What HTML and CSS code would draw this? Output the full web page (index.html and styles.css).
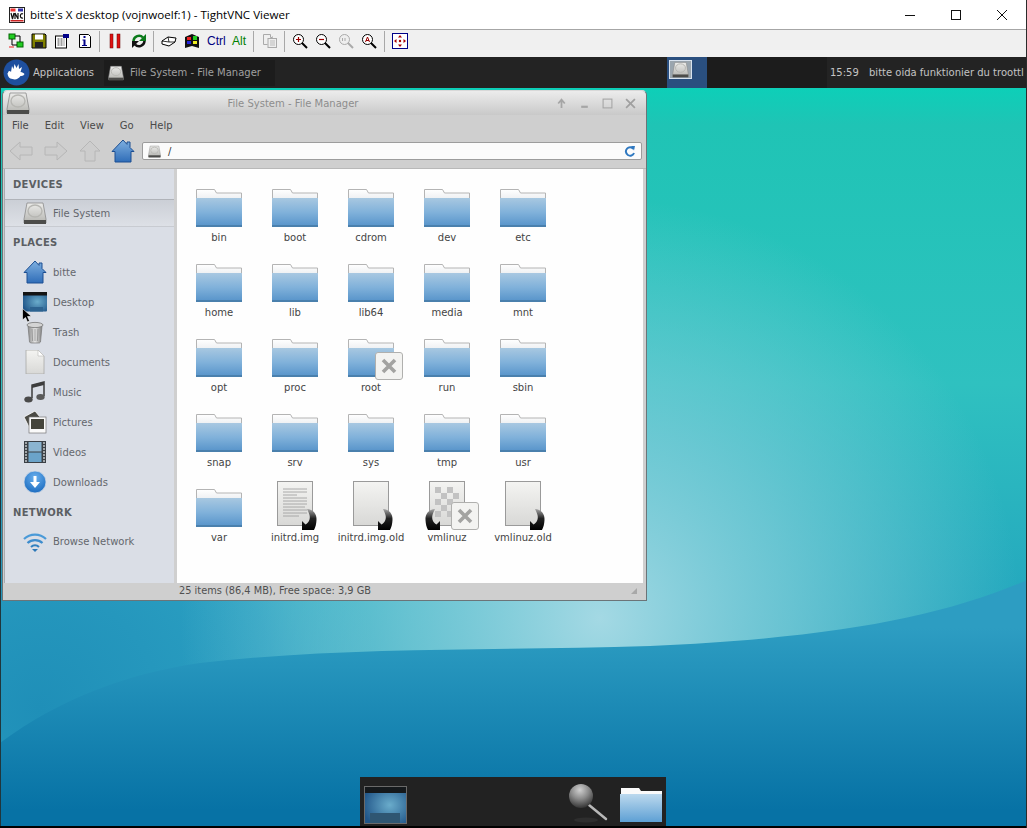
FILE: index.html
```html
<!DOCTYPE html>
<html lang="en">
<head>
<meta charset="utf-8">
<title>bitte's X desktop (vojnwoelf:1) - TightVNC Viewer</title>
<link rel="stylesheet" href="styles.css">
</head>
<body>
<svg class="defs" width="0" height="0" aria-hidden="true">
  <defs>
    <linearGradient id="gFolder" x1="0" y1="0" x2="0" y2="1"><stop offset="0" stop-color="#a8c8e1"/><stop offset=".5" stop-color="#80b1da"/><stop offset="1" stop-color="#5592c9"/></linearGradient>
    <linearGradient id="gDockFolder" x1="0" y1="0" x2="0" y2="1"><stop offset="0" stop-color="#bcd9ee"/><stop offset="1" stop-color="#5ea0d4"/></linearGradient>
    <linearGradient id="gTab" x1="0" y1="0" x2="0" y2="1"><stop offset="0" stop-color="#ffffff"/><stop offset="1" stop-color="#e6e9ec"/></linearGradient>
    <linearGradient id="gHome" x1="0" y1="0" x2="0" y2="1"><stop offset="0" stop-color="#7fb0e0"/><stop offset="1" stop-color="#2f6db8"/></linearGradient>
    <linearGradient id="gDisk" x1="0" y1="0" x2="0" y2="1"><stop offset="0" stop-color="#ececea"/><stop offset="1" stop-color="#b4b4b0"/></linearGradient>
    <linearGradient id="gPage" x1="0" y1="0" x2="0" y2="1"><stop offset="0" stop-color="#f4f4f2"/><stop offset="1" stop-color="#d8d8d6"/></linearGradient>
    <linearGradient id="gBin" x1="0" y1="0" x2="1" y2="0"><stop offset="0" stop-color="#8a8a8a"/><stop offset=".5" stop-color="#e6e6e6"/><stop offset="1" stop-color="#808080"/></linearGradient>
    <linearGradient id="gLink" x1="0" y1="0" x2="0" y2="1"><stop offset="0" stop-color="#a8a8a8"/><stop offset=".45" stop-color="#222"/><stop offset="1" stop-color="#000"/></linearGradient>
    <radialGradient id="gDesk" cx=".6" cy=".5" r=".65"><stop offset="0" stop-color="#6aaccb"/><stop offset="1" stop-color="#215689"/></radialGradient>
    <radialGradient id="gBall" cx=".45" cy=".25" r=".75"><stop offset="0" stop-color="#d0d0d0"/><stop offset=".5" stop-color="#8a8a8a"/><stop offset="1" stop-color="#353535"/></radialGradient>
    <radialGradient id="gDl" cx=".5" cy=".3" r=".7"><stop offset="0" stop-color="#6ab0ee"/><stop offset="1" stop-color="#1c6cc0"/></radialGradient>

    <symbol id="folder" viewBox="0 0 46 38">
      <path d="M.5.5h18l2 3.500h25v10H.5z" fill="url(#gTab)" stroke="#b4b4b4"/>
      <rect x="0" y="9" width="46" height="29" fill="url(#gFolder)"/>
      <rect x="0" y="36" width="46" height="2" fill="#4a80ad"/>
    </symbol>
    <symbol id="disk" viewBox="0 0 24 24">
      <path d="M4 2h16l3 16v4H1v-4z" fill="url(#gDisk)" stroke="#8a8a8a" stroke-width=".8"/>
      <ellipse cx="12" cy="10" rx="7" ry="6" fill="none" stroke="#b6b6b2" stroke-width="1.400"/>
      <rect x="1" y="19" width="22" height="4" fill="#4c4c4a"/>
    </symbol>
    <symbol id="home" viewBox="0 0 24 24">
      <path d="M12 1 1 12.500h3V23h16V12.500h3L19 8.500V3h-3v2.400z" fill="url(#gHome)" stroke="#1d4f92"/>
    </symbol>
    <symbol id="arrL" viewBox="0 0 26 24"><path d="M12 3 2 12l10 9v-5h12V8H12z" fill="#cdcdcd" stroke="#b6b6b6"/></symbol>
    <symbol id="arrR" viewBox="0 0 26 24"><path d="M14 3l10 9-10 9v-5H2V8h12z" fill="#cdcdcd" stroke="#b6b6b6"/></symbol>
    <symbol id="arrU" viewBox="0 0 24 24"><path d="M12 2 2 12h5v10h10V12h5z" fill="#cdcdcd" stroke="#b6b6b6"/></symbol>
    <symbol id="desk" viewBox="0 0 24 20">
      <rect x="0" y="0" width="24" height="19.500" rx="1" fill="url(#gDesk)"/>
      <rect x="0" y="0" width="24" height="3.500" fill="#141414"/>
      <rect x="7" y="15" width="13" height="4.500" fill="#2d6390"/>
    </symbol>
    <symbol id="trash" viewBox="0 0 24 24">
      <path d="M5 6h14l-1.500 16a2 2 0 0 1-2 1h-7a2 2 0 0 1-2-1z" fill="url(#gBin)" stroke="#777" stroke-width=".7"/>
      <ellipse cx="12" cy="5" rx="8" ry="2.600" fill="#d4d4d4" stroke="#777" stroke-width=".8"/>
      <path d="M9 9l.6 12M12 9v12M15 9l-.6 12" stroke="#8f8f8f" stroke-width=".8"/>
    </symbol>
    <symbol id="doc" viewBox="0 0 24 24">
      <path d="M3 0h12l6 6v18H3z" fill="url(#gPage)" stroke="#a8a8a6" stroke-width=".8"/>
      <path d="M15 0v6h6z" fill="#ffffff" stroke="#b8b8b6" stroke-width=".6"/>
    </symbol>
    <symbol id="music" viewBox="0 0 24 24">
      <path d="M9 18V5l12-3v14" fill="none" stroke="#3d3d3d" stroke-width="1.500"/>
      <path d="M9 5l12-3v3L9 8z" fill="#3d3d3d"/>
      <ellipse cx="5.500" cy="19.500" rx="4.200" ry="3" fill="#4a4a4a"/>
      <ellipse cx="17.500" cy="17" rx="4.200" ry="3" fill="#5a5a5a"/>
    </symbol>
    <symbol id="pics" viewBox="0 0 24 24">
      <path d="M1 7 12 1l5 6-9 14z" fill="#4b4b45" stroke="#fff" stroke-width=".8"/>
      <rect x="6" y="7" width="17" height="16" fill="#fafafa" stroke="#777" stroke-width=".7"/>
      <rect x="8" y="9" width="13" height="10" fill="#45453c"/>
    </symbol>
    <symbol id="film" viewBox="0 0 24 24">
      <rect x="1" y="1" width="22" height="22" fill="#3b4046"/>
      <rect x="5.500" y="2" width="13" height="9.500" fill="#8bb4d0"/>
      <rect x="5.500" y="12.500" width="13" height="9.500" fill="#6ba3c9"/>
      <path d="M2 3h2M2 6h2M2 9h2M2 12h2M2 15h2M2 18h2M2 21h2M20 3h2M20 6h2M20 9h2M20 12h2M20 15h2M20 18h2M20 21h2" stroke="#c4c7ca" stroke-width="1.400"/>
    </symbol>
    <symbol id="dl" viewBox="0 0 24 24">
      <circle cx="12" cy="12" r="11" fill="url(#gDl)" stroke="#cfd8e4" stroke-width=".8"/>
      <path d="M10.500 6h3v6H17l-5 6-5-6h3.500z" fill="#fff"/>
    </symbol>
    <symbol id="wifi" viewBox="0 0 24 24">
      <path d="M1 9a16 16 0 0 1 22 0" fill="none" stroke="#4a9ad8" stroke-width="2.200"/>
      <path d="M4.500 13a11 11 0 0 1 15 0" fill="none" stroke="#3d8ccd" stroke-width="2.200"/>
      <path d="M8 17a6 6 0 0 1 8 0" fill="none" stroke="#3180c0" stroke-width="2.200"/>
      <path d="M12 22l-3-3h6z" fill="#2c78b8"/>
    </symbol>
    <symbol id="file" viewBox="0 0 36 46">
      <rect x=".5" y=".5" width="35" height="44" fill="url(#gPage)" stroke="#9a9a9a"/>
    </symbol>
    <symbol id="link" viewBox="0 0 16 22">
      <path d="M6 1c6 0 10 5 9.500 11-.2 4-1 7-2.500 10H1v-9l3.500 3.500C8 14.500 9.500 11 8.500 7 8 5 7 3 6 1z" fill="url(#gLink)"/>
    </symbol>
    <symbol id="bad" viewBox="0 0 28 28">
      <rect x=".5" y=".5" width="27" height="27" rx="2.500" fill="#f3f3f1" stroke="#b0b0ae"/>
      <path d="M8 8l12 12M20 8 8 20" stroke="#a3a3a1" stroke-width="3.600"/>
    </symbol>
  </defs>
</svg>

<header class="vnc-title">
  <svg class="vnc-logo" viewBox="0 0 16 16"><rect x=".5" y=".5" width="15" height="15" fill="#fff" stroke="#222"/><rect x="1.500" y="1.500" width="5" height="3" fill="#e33"/><rect x="9" y="1.500" width="5" height="3" fill="#33a"/><path d="M2 6l1.500 6L5 6M6 12V6l3 6V6M14 7c-3-2-4 5 0 4" fill="none" stroke="#111" stroke-width="1.200"/><rect x="1.500" y="13" width="13" height="1.500" fill="#c22"/></svg>
  <span class="vnc-name">bitte's X desktop (vojnwoelf:1) - TightVNC Viewer</span>
  <div class="vnc-controls">
    <svg class="ctl" viewBox="0 0 10 10"><path d="M0 5.500h10" stroke="#111"/></svg>
    <svg class="ctl" viewBox="0 0 10 10"><rect x=".5" y=".5" width="9" height="9" fill="none" stroke="#111"/></svg>
    <svg class="ctl" viewBox="0 0 10 10"><path d="M0 0l10 10M10 0 0 10" stroke="#111"/></svg>
  </div>
</header>

<nav class="vnc-toolbar">
  <svg class="tb" viewBox="0 0 16 16"><rect x="1" y="1" width="6" height="5" fill="#2c2" stroke="#060"/><rect x="9" y="9" width="6" height="5" fill="#2c2" stroke="#060"/><path d="M4 6v6h5M7 3h5v6" fill="none" stroke="#000"/><path d="M1 14h5" stroke="#e22"/></svg>
  <svg class="tb" viewBox="0 0 16 16"><path d="M1 1h13l1 1v13H1z" fill="#808000" stroke="#000"/><rect x="4" y="1.500" width="8" height="5" fill="#fff"/><rect x="4" y="9" width="8" height="6" fill="#222"/></svg>
  <svg class="tb" viewBox="0 0 16 16"><rect x="1.500" y="3" width="11" height="12" fill="#fff" stroke="#000"/><path d="M3.500 6h7M3.500 8h7M3.500 10h7M3.500 12h7" stroke="#444" stroke-dasharray="2 1"/><rect x="9" y="1" width="6" height="4" fill="#008"/></svg>
  <svg class="tb" viewBox="0 0 16 16"><path d="M2.500 1.500h9l2 2v11h-11z" fill="#fff" stroke="#000"/><rect x="6.500" y="3" width="2" height="2" fill="#008"/><path d="M5.500 6.500h3v5.500h1.500v1H5v-1h1.500V7.500h-1z" fill="#008"/></svg>
  <i class="tsep"></i>
  <svg class="tb" viewBox="0 0 16 16"><rect x="3" y="1" width="3" height="14" fill="#e01010" stroke="#600" stroke-width=".5"/><rect x="10" y="1" width="3" height="14" fill="#e01010" stroke="#600" stroke-width=".5"/></svg>
  <svg class="tb tb-nudge" viewBox="0 0 16 16"><path d="M2.500 8A5.500 5.500 0 0 1 12 4.500" fill="none" stroke="#0a7a1a" stroke-width="2.500"/><path d="M15 1v7H8z" fill="#0a7a1a"/><path d="M13.500 8A5.500 5.500 0 0 1 4 11.500" fill="none" stroke="#111" stroke-width="2.500"/><path d="M1 15V8h7z" fill="#111"/></svg>
  <i class="tsep"></i>
  <svg class="tb" viewBox="0 0 16 16"><path d="M1 8l6-4 8 1-1 4-6 4-7-2z" fill="#fff" stroke="#000"/><path d="M7 4l1 5 6 0M1 8l7 1" fill="none" stroke="#000" stroke-width=".8"/></svg>
  <svg class="tb" viewBox="0 0 16 16"><path d="M1 4l7-3 7 3v11l-7-2-7 2z" fill="#111"/><rect x="3" y="4" width="4" height="3" fill="#e22"/><rect x="9" y="3" width="4" height="4" fill="#2c2"/><rect x="3" y="8" width="4" height="3" fill="#22d"/><rect x="9" y="8" width="4" height="3" fill="#ee2"/></svg>
  <span class="tb-text tb-ctrl">Ctrl</span>
  <span class="tb-text tb-alt">Alt</span>
  <i class="tsep"></i>
  <svg class="tb tb-nudge" viewBox="0 0 16 16"><path d="M1.500 1.500h7v3h2v-1M1.500 1.500v10h4" fill="#eee" stroke="#aaa"/><rect x="6" y="5.500" width="8.500" height="9" fill="#eee" stroke="#aaa"/><path d="M8 8h5M8 10h5M8 12h5" stroke="#bbb"/></svg>
  <i class="tsep"></i>
  <svg class="tb" viewBox="0 0 16 16"><circle cx="6.500" cy="6.500" r="5" fill="#fff" stroke="#000"/><path d="M10 10l5 5" stroke="#000" stroke-width="2"/><path d="M4 6.500h5M6.500 4v5" stroke="#900" stroke-width="1.200"/></svg>
  <svg class="tb" viewBox="0 0 16 16"><circle cx="6.500" cy="6.500" r="5" fill="#fff" stroke="#000"/><path d="M10 10l5 5" stroke="#000" stroke-width="2"/><path d="M4 6.500h5" stroke="#900" stroke-width="1.200"/></svg>
  <svg class="tb" viewBox="0 0 16 16"><circle cx="6.500" cy="6.500" r="5" fill="#eee" stroke="#aaa"/><path d="M10 10l5 5" stroke="#aaa" stroke-width="2"/><path d="M4.500 5v3M7 5v3" stroke="#aaa"/></svg>
  <svg class="tb" viewBox="0 0 16 16"><circle cx="6.500" cy="6.500" r="5" fill="#fff" stroke="#000"/><path d="M10 10l5 5" stroke="#000" stroke-width="2"/><path d="M4.500 9l2-5 2 5M5 7.500h3" fill="none" stroke="#900"/></svg>
  <i class="tsep tsep-last"></i>
  <svg class="tb" viewBox="0 0 16 16"><rect x=".5" y=".5" width="15" height="15" fill="#fff" stroke="#008"/><path d="M8 2l2 2.500H6zM8 14l2-2.500H6zM2 8l2.500-2v4zM14 8l-2.500-2v4z" fill="#a00"/><circle cx="8" cy="8" r="1.200" fill="#a00"/></svg>
</nav>

<section class="xfce-panel">
  <svg class="xfce-logo" viewBox="0 0 27 27"><circle cx="13.500" cy="13.500" r="13" fill="#1e4f9e"/><path d="M5 14c0-2 2-3 3-1l1-6 1.500 3 1-5 2 4 2-4 .5 5 3-2-1.500 5c2 0 3 1 4 2-1 2-3 2-4 2-2 3-5 4-8 3-3 0-5-3-5-6z" fill="#fff"/></svg>
  <span class="panel-apps">Applications</span>
  <div class="panel-task">
    <svg class="task-icon"><use href="#disk"/></svg>
    <span>File System - File Manager</span>
  </div>
  <div class="panel-pager">
    <div class="pager-cell pager-on"><svg class="pager-win"><use href="#disk"/></svg></div>
    <div class="pager-cell"></div>
    <div class="pager-cell"></div>
    <div class="pager-cell"></div>
  </div>
  <span class="panel-clock">15:59</span>
  <span class="panel-user">bitte oida funktionier du troottl</span>
</section>

<main class="desktop">
  <svg class="wallpaper" viewBox="0 0 1027 738" preserveAspectRatio="none">
    <defs>
      <linearGradient id="wBase" x1="0" y1="0" x2="0" y2="1"><stop offset="0" stop-color="#0dcfb8"/><stop offset=".05" stop-color="#1fc4b5"/><stop offset=".4" stop-color="#2fc1c0"/><stop offset=".7" stop-color="#24a7be"/><stop offset="1" stop-color="#1a90b5"/></linearGradient>
      <radialGradient id="wGlow" gradientUnits="userSpaceOnUse" cx="600" cy="530" r="420"><stop offset="0" stop-color="#a4d9e4"/><stop offset=".45" stop-color="#7fcdd9" stop-opacity=".75"/><stop offset="1" stop-color="#7fcdd9" stop-opacity="0"/></radialGradient>
      <radialGradient id="wLeft" gradientUnits="userSpaceOnUse" cx="40" cy="620" r="340"><stop offset="0" stop-color="#1f8fb8"/><stop offset=".35" stop-color="#2597bd"/><stop offset=".7" stop-color="#2c9fc2" stop-opacity=".85"/><stop offset="1" stop-color="#46aecb" stop-opacity="0"/></radialGradient>
      <linearGradient id="wLow" gradientUnits="userSpaceOnUse" x1="0" y1="540" x2="0" y2="722"><stop offset="0" stop-color="#2d9dc2"/><stop offset="1" stop-color="#0772a5"/></linearGradient>
    </defs>
    <rect width="1027" height="738" fill="url(#wBase)"/>
    <rect width="1027" height="738" fill="url(#wLeft)"/>
    <rect width="1027" height="738" fill="url(#wGlow)"/>
    <path d="M1027 492C940 530 830 550 650 558 500 563 350 558 200 575 130 585 60 610 0 655V738H1027Z" fill="url(#wLow)"/>
  </svg>

  <article class="fm">
    <div class="fm-title">
      <svg class="fm-wicon"><use href="#disk"/></svg>
      <span class="fm-name">File System - File Manager</span>
      <div class="fm-btns">
        <svg class="fm-btn" viewBox="0 0 10 10"><path d="M5 9V2M2 5l3-3.500L8 5" fill="none" stroke="#a6a6a6" stroke-width="1.600"/></svg>
        <svg class="fm-btn" viewBox="0 0 10 10"><path d="M2 8h6" stroke="#a6a6a6" stroke-width="2"/></svg>
        <svg class="fm-btn" viewBox="0 0 10 10"><rect x="1" y="1" width="8" height="8" fill="none" stroke="#a6a6a6"/></svg>
        <svg class="fm-btn" viewBox="0 0 10 10"><path d="M1 1l8 8M9 1 1 9" stroke="#a0a0a0" stroke-width="1.600"/></svg>
      </div>
    </div>
    <div class="fm-menu"><span>File</span><span>Edit</span><span>View</span><span>Go</span><span>Help</span></div>
    <div class="fm-tools">
      <svg class="tool-nav"><use href="#arrL"/></svg>
      <svg class="tool-nav"><use href="#arrR"/></svg>
      <svg class="tool-nav tool-up"><use href="#arrU"/></svg>
      <svg class="tool-nav tool-home"><use href="#home"/></svg>
      <div class="fm-path">
        <svg class="path-disk"><use href="#disk"/></svg>
        <span class="path-text">/</span>
        <svg class="path-reload" viewBox="0 0 12 12"><path d="M9.500 4A4.200 4.200 0 1 0 10 8" fill="none" stroke="#2f78c0" stroke-width="2"/><path d="M7 1l4 0-1 4.500z" fill="#2f78c0"/></svg>
      </div>
    </div>
    <div class="fm-body">
      <aside class="side">
        <div class="side-head">DEVICES</div>
        <div class="side-row side-sel"><svg class="side-icon"><use href="#disk"/></svg><span>File System</span></div>
        <div class="side-head">PLACES</div>
        <div class="side-row"><svg class="side-icon"><use href="#home"/></svg><span>bitte</span></div>
        <div class="side-row"><svg class="side-icon"><use href="#desk"/></svg><span>Desktop</span></div>
        <div class="side-row"><svg class="side-icon"><use href="#trash"/></svg><span>Trash</span></div>
        <div class="side-row"><svg class="side-icon"><use href="#doc"/></svg><span>Documents</span></div>
        <div class="side-row"><svg class="side-icon"><use href="#music"/></svg><span>Music</span></div>
        <div class="side-row"><svg class="side-icon"><use href="#pics"/></svg><span>Pictures</span></div>
        <div class="side-row"><svg class="side-icon"><use href="#film"/></svg><span>Videos</span></div>
        <div class="side-row"><svg class="side-icon"><use href="#dl"/></svg><span>Downloads</span></div>
        <div class="side-head">NETWORK</div>
        <div class="side-row side-net"><svg class="side-icon"><use href="#wifi"/></svg><span>Browse Network</span></div>
      </aside>
      <div class="split"></div>
      <div class="files">
        <div class="grid">
          <div class="item"><div class="ic"><svg class="ic-folder"><use href="#folder"/></svg></div><span>bin</span></div>
          <div class="item"><div class="ic"><svg class="ic-folder"><use href="#folder"/></svg></div><span>boot</span></div>
          <div class="item"><div class="ic"><svg class="ic-folder"><use href="#folder"/></svg></div><span>cdrom</span></div>
          <div class="item"><div class="ic"><svg class="ic-folder"><use href="#folder"/></svg></div><span>dev</span></div>
          <div class="item"><div class="ic"><svg class="ic-folder"><use href="#folder"/></svg></div><span>etc</span></div>
          <div class="item"><div class="ic"><svg class="ic-folder"><use href="#folder"/></svg></div><span>home</span></div>
          <div class="item"><div class="ic"><svg class="ic-folder"><use href="#folder"/></svg></div><span>lib</span></div>
          <div class="item"><div class="ic"><svg class="ic-folder"><use href="#folder"/></svg></div><span>lib64</span></div>
          <div class="item"><div class="ic"><svg class="ic-folder"><use href="#folder"/></svg></div><span>media</span></div>
          <div class="item"><div class="ic"><svg class="ic-folder"><use href="#folder"/></svg></div><span>mnt</span></div>
          <div class="item"><div class="ic"><svg class="ic-folder"><use href="#folder"/></svg></div><span>opt</span></div>
          <div class="item"><div class="ic"><svg class="ic-folder"><use href="#folder"/></svg></div><span>proc</span></div>
          <div class="item"><div class="ic"><svg class="ic-folder"><use href="#folder"/></svg><svg class="badge"><use href="#bad"/></svg></div><span>root</span></div>
          <div class="item"><div class="ic"><svg class="ic-folder"><use href="#folder"/></svg></div><span>run</span></div>
          <div class="item"><div class="ic"><svg class="ic-folder"><use href="#folder"/></svg></div><span>sbin</span></div>
          <div class="item"><div class="ic"><svg class="ic-folder"><use href="#folder"/></svg></div><span>snap</span></div>
          <div class="item"><div class="ic"><svg class="ic-folder"><use href="#folder"/></svg></div><span>srv</span></div>
          <div class="item"><div class="ic"><svg class="ic-folder"><use href="#folder"/></svg></div><span>sys</span></div>
          <div class="item"><div class="ic"><svg class="ic-folder"><use href="#folder"/></svg></div><span>tmp</span></div>
          <div class="item"><div class="ic"><svg class="ic-folder"><use href="#folder"/></svg></div><span>usr</span></div>
          <div class="item"><div class="ic"><svg class="ic-folder"><use href="#folder"/></svg></div><span>var</span></div>
          <div class="item"><div class="ic">
            <svg class="ic-file" viewBox="0 0 36 46"><use href="#file" width="36" height="46"/><path d="M6 8h24M6 11h24M6 14h14M6 17h24M6 20h24M6 23h24M6 26h22M6 29h24M6 32h24M6 35h16" stroke="#9a9a9a" stroke-width=".8"/></svg>
            <svg class="link link-r"><use href="#link"/></svg></div><span>initrd.img</span></div>
          <div class="item"><div class="ic"><svg class="ic-file"><use href="#file"/></svg><svg class="link link-r"><use href="#link"/></svg></div><span>initrd.img.old</span></div>
          <div class="item"><div class="ic">
            <svg class="ic-file" viewBox="0 0 36 46"><use href="#file" width="36" height="46"/><path d="M6 6h6v6H6zM18 6h6v6h-6zM12 12h6v6h-6zM24 12h6v6h-6zM6 18h6v6H6zM18 18h6v6h-6zM12 24h6v6h-6zM6 30h6v6H6zM18 30h6v6h-6z" fill="#c2c2c2"/></svg>
            <svg class="link link-l"><use href="#link"/></svg><svg class="badge"><use href="#bad"/></svg></div><span>vmlinuz</span></div>
          <div class="item"><div class="ic"><svg class="ic-file"><use href="#file"/></svg><svg class="link link-r"><use href="#link"/></svg></div><span>vmlinuz.old</span></div>
        </div>
      </div>
    </div>
    <footer class="fm-status">
      <span>25 items (86,4 MB), Free space: 3,9 GB</span>
      <svg class="grip" viewBox="0 0 8 8"><path d="M7 1v6H1z" fill="#a8a8a8"/></svg>
    </footer>
  </article>

  <svg class="cursor" viewBox="0 0 10 15"><path d="M.5.5v11.500l3-2.500 2 4.500 2-1-2-4.500h4z" fill="#000" stroke="#fff" stroke-width=".6"/></svg>

  <div class="dock">
    <svg class="dock-desk" viewBox="0 0 43 38"><rect x=".5" y=".5" width="42" height="37" fill="url(#gDesk)" stroke="#6a6a6a"/><rect x="1" y="1" width="41" height="6" fill="#15191c"/><rect x="6" y="27" width="30" height="10" fill="#2f5672"/></svg>
    <svg class="dock-search" viewBox="0 0 40 40"><path d="M21 21l17 14" stroke="#b8b8b8" stroke-width="2.500" stroke-linecap="round"/><circle cx="13" cy="12" r="12" fill="url(#gBall)"/><ellipse cx="18" cy="36" rx="12" ry="2.500" fill="#2e2e2e"/></svg>
    <svg class="dock-folder" viewBox="0 0 42 34"><path d="M1 0h18l2 3h21v9H1z" fill="#fafafa"/><path d="M0 6h42v28H0z" fill="url(#gDockFolder)"/></svg>
  </div>
</main>
</body>
</html>
```

FILE: styles.css
```css
* { box-sizing: border-box; }
html, body { margin: 0; padding: 0; }
body {
  width: 1027px;
  height: 828px;
  overflow: hidden;
  display: flex;
  flex-direction: column;
  background: #000;
  font-family: "DejaVu Sans", sans-serif;
  border-right: 1px solid #2b2b2b;
}
.defs { position: absolute; }

/* TightVNC frame */
.vnc-title {
  flex: 0 0 29px;
  display: flex;
  align-items: center;
  background: #fff;
  padding-left: 9px;
  font-family: "Open Sans", sans-serif;
  font-size: 11.600px;
  color: #000;
}
.vnc-logo { width: 16px; height: 16px; margin-right: 5px; }
.vnc-name { flex: 1; }
.vnc-controls { display: flex; align-items: center; gap: 36px; padding-right: 19px; }
.ctl { width: 10px; height: 10px; }

.vnc-toolbar {
  flex: 0 0 28px;
  display: flex;
  align-items: center;
  gap: 7px;
  background: #f0f0f0;
  border-top: 1px solid #a6a6a6;
  padding: 0 0 5px 8px;
}
.tb { width: 16px; height: 16px; flex: none; }
.tb-nudge { margin-left: 1px; }
.tsep { width: 1px; height: 21px; background: #a8a8a8; flex: none; margin-left: -1px; }
.tsep-last { margin-left: 0; }
.tb-text { font-family: "Liberation Sans", sans-serif; font-size: 12px; width: 16px; text-align: center; flex: none; }
.tb-ctrl { color: #000080; }
.tb-alt { color: #008000; margin-left: 1px; }

/* Xfce panel */
.xfce-panel {
  flex: 0 0 31px;
  display: flex;
  align-items: center;
  background: #232323;
  color: #c4c4c4;
  font-size: 10px;
  padding-left: 3px;
}
.xfce-logo { width: 27px; height: 27px; flex: none; margin-right: 3px; }
.panel-apps { width: 71px; flex: none; }
.panel-task {
  width: 171px;
  height: 26px;
  display: flex;
  align-items: center;
  gap: 6px;
  padding-left: 4px;
  background: #1c1c1c;
  color: #a0a0a0;
  flex: none;
}
.task-icon { width: 16px; height: 16px; }
.panel-pager { display: flex; margin-left: auto; height: 31px; }
.pager-cell { width: 40px; background: #1c1c1c; display: flex; align-items: center; padding-left: 2px; padding-bottom: 7px; }
.pager-on { background: #2a4f7f; }
.pager-win { width: 23px; height: 19px; border: 1px solid #d8e2ee; background: #9aa5ae; }
.panel-clock { margin-left: 3px; width: 39px; flex: none; }
.panel-user { width: 157px; flex: none; white-space: nowrap; }

/* Desktop */
.desktop {
  position: relative;
  flex: 0 0 738px;
  overflow: hidden;
  border-left: 1px solid #20363c;
}
.wallpaper { position: absolute; left: -1px; top: 0; width: 1027px; height: 738px; }
.cursor { position: absolute; left: 21px; top: 220px; width: 10px; height: 15px; }

/* File manager window */
.fm {
  position: absolute;
  left: 1px;
  top: 2px;
  width: 645px;
  height: 511px;
  display: flex;
  flex-direction: column;
  background: #cfcfcf;
  border: 1px solid #6b7478;
  border-top-color: #d8d8d8;
  border-radius: 5px 5px 0 0;
  color: #4e4e4e;
  font-size: 10px;
}
.fm-title {
  flex: 0 0 24px;
  display: flex;
  align-items: center;
  padding-left: 3px;
  background: linear-gradient(#ececec, #c9c9c9);
  border-radius: 5px 5px 0 0;
}
.fm-wicon { width: 24px; height: 24px; flex: none; }
.fm-name { flex: 1; text-align: center; color: #8d8d8d; font-size: 10px; }
.fm-btns { display: flex; gap: 12px; padding-right: 10px; }
.fm-btn { width: 11px; height: 11px; }
.fm-menu {
  flex: 0 0 20px;
  display: flex;
  align-items: center;
  gap: 16px;
  padding-left: 9px;
  background: #cfcfcf;
  color: #4a4a4a;
  font-size: 10px;
}
.fm-tools {
  flex: 0 0 30px;
  display: flex;
  align-items: center;
  padding: 2px 4px 0 5px;
  background: #cfcfcf;
}
.tool-nav { width: 26px; height: 24px; margin-right: 9px; flex: none; }
.tool-up { width: 24px; }
.tool-home { width: 24px; margin-right: 7px; }
.fm-path {
  flex: 1;
  height: 18px;
  display: flex;
  align-items: center;
  gap: 7px;
  padding: 0 5px;
  background: #fbfbfb;
  border: 1px solid #9c9c9c;
  border-radius: 2px;
  color: #333;
}
.path-disk { width: 13px; height: 13px; }
.path-text { flex: 1; font-size: 10px; }
.path-reload { width: 12px; height: 12px; }
.fm-body {
  flex: 1;
  min-height: 0;
  display: flex;
  margin-top: 3px;
  padding-left: 1px;
  border-top: 1px solid #b8b8b8;
}
.side {
  width: 170px;
  background: #dadee6;
  border-left: 1px solid #a7abb0;
  color: #64676d;
  font-size: 10px;
}
.side-head {
  height: 30px;
  display: flex;
  align-items: center;
  padding-left: 8px;
  font-weight: bold;
  font-size: 10px;
  color: #5b5e63;
  letter-spacing: .3px;
}
.side-row {
  height: 30px;
  display: flex;
  align-items: center;
  gap: 6px;
  padding-left: 18px;
}
.side-sel {
  height: 28px;
  background: linear-gradient(#cbcfd6, #dde0e6);
  border-top: 1px solid #b0b3b9;
  border-bottom: 1px solid #c8cbd1;
}
.side-net { height: 29px; }
.side-icon { width: 24px; height: 24px; flex: none; }
.split { width: 3px; background: #cfcfcf; }
.files {
  flex: 0 0 466px;
  background: #fefefe;
  padding: 12px 0 0 4px;
}
.grid {
  display: grid;
  grid-template-columns: repeat(5, 76px);
  grid-auto-rows: 64px;
  row-gap: 11px;
}
.item {
  display: flex;
  flex-direction: column;
  align-items: center;
  color: #444;
  font-size: 10px;
  line-height: 14px;
}
.ic { position: relative; width: 50px; height: 50px; display: flex; justify-content: center; align-items: flex-start; }
.ic-folder { width: 46px; height: 38px; margin-top: 8px; }
.ic-file { width: 36px; height: 46px; }
.badge { position: absolute; left: 29px; top: 21px; width: 28px; height: 28px; }
.link { position: absolute; top: 27px; width: 16px; height: 22px; }
.link-r { left: 31px; }
.link-l { left: 3px; transform: scaleX(-1); }
.fm-status {
  flex: 0 0 17px;
  display: flex;
  align-items: center;
  justify-content: space-between;
  padding: 0 8px 2px 176px;
  background: #cfcfcf;
  color: #505050;
  font-size: 9.800px;
}
.grip { width: 8px; height: 8px; }

/* Dock */
.dock {
  position: absolute;
  left: 359px;
  top: 689px;
  width: 306px;
  height: 49px;
  background: #222;
  display: flex;
  align-items: flex-start;
  padding-left: 4px;
}
.dock-desk { width: 43px; height: 38px; margin-top: 9px; flex: none; }
.dock-search { width: 40px; height: 40px; margin-left: 161px; margin-top: 7px; flex: none; }
.dock-folder { width: 42px; height: 34px; margin-left: 12px; margin-top: 11px; flex: none; }
```
